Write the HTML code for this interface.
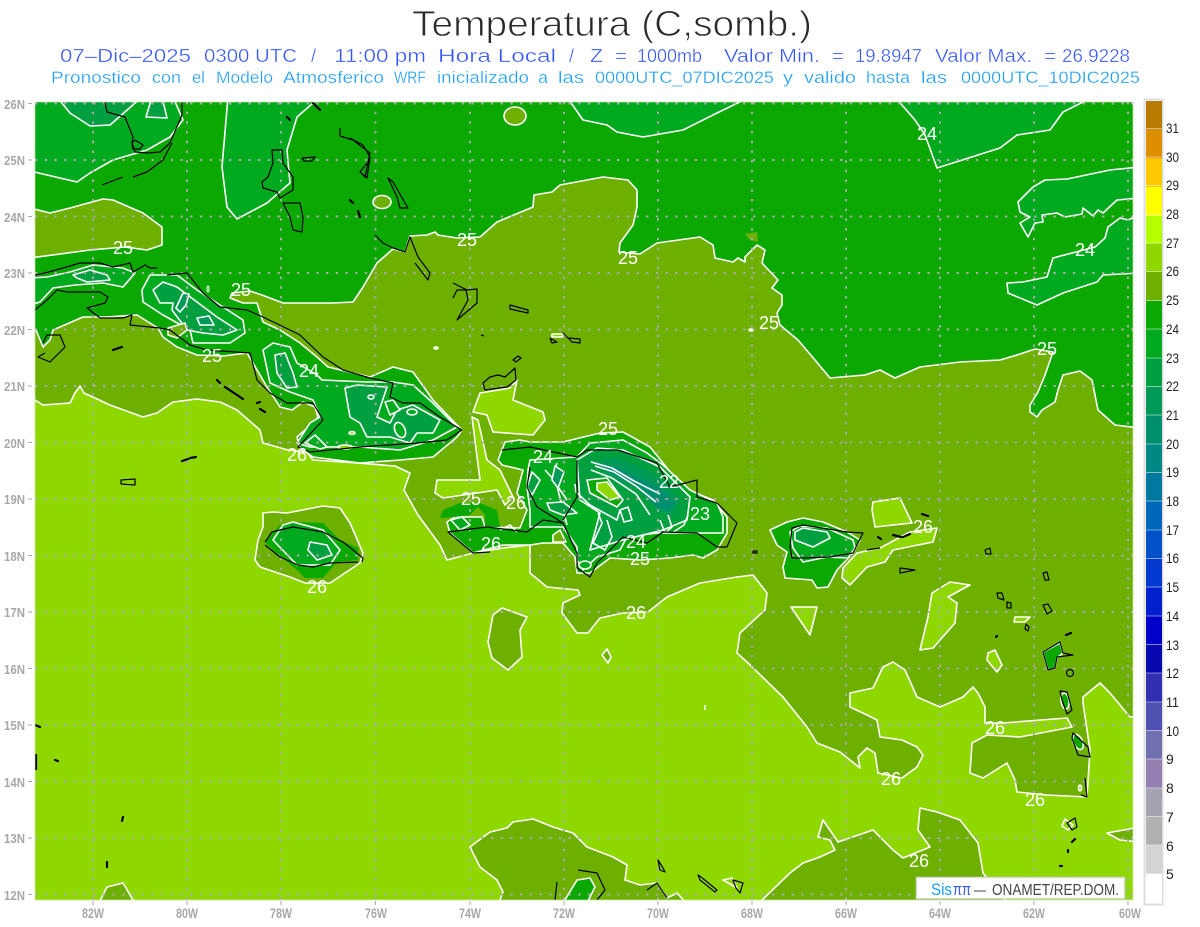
<!DOCTYPE html>
<html><head><meta charset="utf-8"><title>Temperatura</title>
<style>
html,body{margin:0;padding:0;background:#fff;width:1200px;height:927px;overflow:hidden}
svg{display:block}
text{font-family:"Liberation Sans",sans-serif}
.w{fill:#fff;font-size:18px;text-anchor:middle;dominant-baseline:central}
.c{stroke:#fff;stroke-width:1.6;stroke-linejoin:round;fill:none}
.k{stroke:#000;stroke-width:1.2;fill:none;stroke-linejoin:round}
.kk{stroke:#000;stroke-width:2.2;fill:none;stroke-linecap:round}
.ol{fill:#6eb000}.lt{fill:#8ed800}.g24{fill:#0aa800}.g23{fill:#00aa1e}.g22{fill:#00a040}.g21{fill:#009a58}.g20{fill:#009070}
.ax{fill:#a8a8a8;font-size:13px;font-weight:bold}
.cb{fill:#222;font-size:14px}
.l2{fill:#3355ff;font-size:18px;stroke:#fff;stroke-width:.35}
.l3{fill:#1a9cff;font-size:16.5px;stroke:#fff;stroke-width:.3}
</style></head><body>
<svg width="1200" height="927" viewBox="0 0 1200 927" xmlns="http://www.w3.org/2000/svg">
<defs><clipPath id="m"><rect x="35" y="102" width="1098" height="798"/></clipPath></defs>

<text x="412" y="36" font-size="36" fill="#2a2a2a" stroke="#fff" stroke-width=".9" textLength="400" lengthAdjust="spacingAndGlyphs">Temperatura (C,somb.)</text>

<g class="l2">
<text x="60" y="62" textLength="131" lengthAdjust="spacingAndGlyphs">07–Dic–2025</text>
<text x="204" y="62" textLength="93" lengthAdjust="spacingAndGlyphs">0300 UTC</text>
<text x="311" y="62">/</text>
<text x="334" y="62" textLength="92" lengthAdjust="spacingAndGlyphs">11:00 pm</text>
<text x="438" y="62" textLength="118" lengthAdjust="spacingAndGlyphs">Hora Local</text>
<text x="569" y="62">/</text>
<text x="590" y="62" textLength="13" lengthAdjust="spacingAndGlyphs">Z</text>
<text x="615" y="62" textLength="12" lengthAdjust="spacingAndGlyphs">=</text>
<text x="637" y="62" textLength="65" lengthAdjust="spacingAndGlyphs">1000mb</text>
<text x="724" y="62" textLength="96" lengthAdjust="spacingAndGlyphs">Valor Min.</text>
<text x="832" y="62" textLength="12" lengthAdjust="spacingAndGlyphs">=</text>
<text x="855" y="62" textLength="67" lengthAdjust="spacingAndGlyphs">19.8947</text>
<text x="935" y="62" textLength="97" lengthAdjust="spacingAndGlyphs">Valor Max.</text>
<text x="1044" y="62" textLength="12" lengthAdjust="spacingAndGlyphs">=</text>
<text x="1062" y="62" textLength="68" lengthAdjust="spacingAndGlyphs">26.9228</text>
</g>
<g class="l3">
<text x="51" y="83" textLength="90" lengthAdjust="spacingAndGlyphs">Pronostico</text>
<text x="152" y="83" textLength="29" lengthAdjust="spacingAndGlyphs">con</text>
<text x="192" y="83" textLength="13" lengthAdjust="spacingAndGlyphs">el</text>
<text x="216" y="83" textLength="57" lengthAdjust="spacingAndGlyphs">Modelo</text>
<text x="283" y="83" textLength="101" lengthAdjust="spacingAndGlyphs">Atmosferico</text>
<text x="394" y="83" textLength="32" lengthAdjust="spacingAndGlyphs">WRF</text>
<text x="437" y="83" textLength="92" lengthAdjust="spacingAndGlyphs">inicializado</text>
<text x="538" y="83" textLength="10" lengthAdjust="spacingAndGlyphs">a</text>
<text x="558" y="83" textLength="26" lengthAdjust="spacingAndGlyphs">las</text>
<text x="595" y="83" textLength="179" lengthAdjust="spacingAndGlyphs">0000UTC_07DIC2025</text>
<text x="783" y="83" textLength="10" lengthAdjust="spacingAndGlyphs">y</text>
<text x="804" y="83" textLength="52" lengthAdjust="spacingAndGlyphs">valido</text>
<text x="866" y="83" textLength="44" lengthAdjust="spacingAndGlyphs">hasta</text>
<text x="921" y="83" textLength="26" lengthAdjust="spacingAndGlyphs">las</text>
<text x="961" y="83" textLength="179" lengthAdjust="spacingAndGlyphs">0000UTC_10DIC2025</text>
</g>

<g clip-path="url(#m)">
<rect x="35" y="102" width="1098" height="798" class="ol"/>

<!-- 26+ light -->
<polygon class="lt c" points="35,400 43,405 70,403 75,393 80,386 84,393 110,405 143,417 157,413 173,402 197,399 220,402 237,410 260,430 263,443 288,450 307,452 313,460 357,463 395,466 410,473 404,490 418,515 440,545 447,560 473,553 503,548 530,545 530,573 547,587 578,590 580,595 563,603 562,613 577,633 588,633 600,618 623,613 648,612 667,597 700,583 737,577 753,575 767,593 765,610 740,633 737,653 747,662 783,697 807,727 817,743 840,752 860,768 858,757 867,748 875,753 878,773 902,778 917,767 923,755 917,747 902,740 880,737 877,720 867,715 850,707 850,693 873,688 883,667 893,662 905,670 917,697 940,707 963,697 973,687 978,693 985,707 985,723 1003,723 1067,718 1072,727 1020,737 987,735 972,743 970,773 983,778 1007,763 1015,780 1017,792 1047,795 1087,797 1090,750 1083,703 1083,697 1100,683 1110,693 1130,717 1140,717 1140,910 30,910 30,400"/>
<polygon class="lt c" points="472,417 478,420 487,460 500,470 513,497 505,505 497,490 443,498 435,493 437,480 480,480"/>
<polygon class="lt c" points="517,380 513,400 543,412 545,420 533,435 493,432 487,415 473,412 480,393 510,388"/>
<polygon class="lt c" points="791,607 817,607 810,635"/>
<polygon class="lt c" points="970,585 950,582 932,593 928,617 920,650 933,648 955,623 957,603 948,597"/>
<polygon class="lt c" points="988,653 995,650 1002,665 997,672 987,660"/>
<polygon class="lt c" points="1015,617 1030,617 1025,622 1014,622"/>
<polygon class="lt c" points="873,502 900,498 912,523 875,527 872,510"/>
<polygon class="lt c" points="937,528 933,542 893,550 885,562 867,567 850,585 842,578 843,568 857,553 880,548 910,532"/>

<!-- olive patches in the south -->
<polygon class="ol c" points="470,847 490,832 507,828 513,822 533,819 553,827 573,833 587,847 613,857 627,865 625,880 640,885 657,883 667,898 677,893 688,905 498,905 503,892 497,880 480,867"/>
<polygon class="ol c" points="757,905 790,873 803,863 820,857 835,850 830,840 818,837 823,820 838,842 873,830 893,850 903,858 930,847 918,830 920,808 937,812 960,820 978,843 983,873 1000,895 1010,905"/>
<polygon class="ol c" points="502,608 527,617 520,630 522,657 508,670 492,658 488,642 493,615"/>
<polygon class="ol c" points="607,649 602,655 608,663 611,657"/>
<polygon class="ol c" points="98,905 107,887 123,883 136,905"/>
<polygon class="ol c" points="1140,827 1107,833 1120,840 1140,842"/>

<!-- 24-25 main -->
<polygon class="g24 c" points="30,97 1140,97 1140,428 1115,425 1098,410 1092,380 1080,371 1063,375 1058,390 1055,402 1042,410 1037,417 1030,412 1030,405 1038,392 1045,375 1053,352 1035,349 1017,355 1000,360 960,362 920,367 895,378 880,370 865,375 830,378 815,360 798,340 780,325 777,313 782,305 782,295 772,288 778,280 762,263 765,250 757,245 745,257 745,262 738,258 733,262 715,258 713,245 700,237 657,243 640,254 619,252 620,243 633,225 637,207 637,190 628,180 603,177 560,185 552,192 534,195 533,207 497,222 480,237 457,238 438,235 435,232 427,235 410,236 405,252 393,249 377,263 363,287 353,302 333,303 283,303 262,295 250,291 232,293 230,298 243,303 257,303 263,322 280,330 300,343 317,357 328,367 370,377 393,367 413,372 433,400 457,425 462,430 457,437 433,457 400,460 360,463 313,457 300,448 297,437 313,423 318,417 315,407 303,402 292,410 280,407 267,387 253,363 247,353 223,356 197,355 177,347 163,337 158,328 137,315 107,317 83,317 53,330 50,340 43,347 36,330 30,330"/>
<polygon class="ol c" points="30,208 50,213 70,208 103,199 113,200 143,213 162,227 162,245 147,250 125,247 90,250 30,258"/>
<ellipse cx="515" cy="116" rx="11" ry="9" class="ol c"/>
<ellipse cx="382" cy="202" rx="9" ry="6.5" class="ol c"/>
<polygon fill="#6eb000" points="745,234 757,232 758,242 750,240"/>

<!-- 23 top patches -->
<polygon class="g23 c" points="30,171 77,182 90,173 113,160 147,150 170,137 183,120 173,97 30,97"/>
<polygon class="g22 c" points="57,97 70,113 90,126 110,125 142,97"/>
<polygon class="g22 c" points="152,97 146,117 167,118 162,97"/>
<polygon class="g23 c" points="228,97 222,167 227,207 237,219 267,203 290,183 287,150 297,117 320,97"/>
<polygon class="g23 c" points="567,97 583,120 607,125 617,132 643,137 683,130 717,113 750,97"/>
<polygon class="g23 c" points="895,97 915,120 925,135 937,168 1000,148 1017,135 1050,130 1063,112 1093,97"/>
<polygon class="g23 c" points="1140,167 1110,170 1067,179 1045,180 1033,187 1018,202 1020,212 1030,217 1020,223 1028,237 1035,223 1043,222 1042,215 1057,213 1065,217 1082,214 1083,208 1093,216 1098,210 1103,213 1117,200 1140,198"/>
<polygon class="g23 c" points="1140,215 1128,220 1120,218 1108,227 1105,238 1095,247 1072,253 1053,258 1047,277 1023,282 1007,283 1008,293 1037,305 1063,293 1097,282 1103,275 1140,273"/>

<!-- Cuba -->
<polygon class="g23 c" points="30,278 47,277 70,272 93,265 123,268 135,273 123,287 103,283 75,285 53,288 40,302 30,305"/>
<polygon class="g22 c" points="73,275 90,270 107,275 110,280 87,282 77,278"/>
<polygon class="g23 c" points="142,290 150,275 177,275 197,290 223,307 243,320 245,333 230,343 193,343 190,330 163,315 143,302"/>
<polygon class="g22 c" points="153,290 163,282 177,287 197,302 217,317 237,330 223,335 203,333 187,330 172,310 173,303 160,303"/>
<polygon class="ol c" points="168,328 185,323 187,330 177,338 168,335"/>
<polygon class="g21 c" points="183,293 189,294 186,305 180,312 176,308"/>
<polygon class="g21 c" points="197,318 209,316 214,325 200,325"/>
<polygon class="g23 c" points="263,350 273,343 290,347 297,363 317,375 322,380 367,382 393,382 413,385 433,403 457,427 433,440 400,450 360,447 310,447 297,443 310,423 320,417 313,400 290,392 270,383"/>
<polygon class="g22 c" points="275,355 285,353 293,373 297,387 287,388 277,373"/>
<polygon class="g22 c" points="345,388 357,385 387,387 377,417 390,423 397,410 413,405 440,420 433,433 417,433 410,443 390,437 367,437 360,423 350,417 347,400"/>
<polygon class="g23 c" points="305,443 315,435 327,447 320,449"/>
<polygon class="g23 c" points="385,402 393,400 400,410 390,415"/>
<ellipse cx="400" cy="430" rx="5" ry="8" class="g23 c" transform="rotate(-25 400 430)"/>
<ellipse cx="412" cy="412" rx="5" ry="3" class="g23 c"/>
<ellipse cx="371" cy="397" rx="3" ry="2" class="g23 c"/>
<ellipse cx="352" cy="433" rx="3" ry="1.5" class="lt c"/>
<ellipse cx="345" cy="447" rx="7" ry="2" class="lt c"/>

<!-- Hispaniola -->
<polygon class="g24 c" points="498,460 505,442 520,440 530,442 563,442 600,433 623,432 650,447 663,463 683,488 713,500 727,517 727,533 717,550 703,558 693,555 670,558 640,560 610,558 590,573 577,573 575,557 563,543 543,543 530,545 503,545 473,553 450,533 447,522 455,517 482,517 485,527 520,528 527,510 517,493 523,470 502,465"/>
<polygon class="g24" points="440,518 443,510 460,503 480,503 497,510 500,527 485,527 485,515 478,507 470,515 455,517"/>
<polygon class="g23 c" points="577,457 590,443 623,440 647,453 663,465 690,490 717,503 723,517 723,533 703,533 657,533 627,537 620,550 597,557 583,570 577,560 577,547 563,527 530,527 530,510 527,487 528,470 530,460"/>
<polygon class="g22 c" points="577,460 597,448 623,450 660,467 690,497 687,520 663,530 623,540 590,550 600,513 580,500"/>
<polygon class="g21" points="593,462 617,458 637,466 660,478 680,500 672,515 657,510 637,490 610,477"/>
<polygon class="g20" points="598,466 617,466 637,477 660,487 675,503 668,512 657,507 637,487 610,473"/>
<polyline class="c" points="591,462 612,468 634,481 660,494"/>
<polyline class="c" points="595,466 614,472 636,486 656,502"/>
<polyline class="c" points="591,470 612,478 636,494 650,515"/>
<polygon class="g24 c" points="587,480 607,478 623,500 617,507 590,493"/>
<polygon class="lt c" points="597,483 607,482 620,497 610,500 597,490"/>
<polyline class="c" points="575,484 576,492 590,505 617,520 620,510"/>
<polyline class="c" points="545,470 556,482 560,498 567,525"/>
<polyline class="c" points="557,463 552,478 558,487 567,500"/>
<polyline class="c" points="598,513 602,523 593,543 605,550 612,537 607,520"/>
<polygon class="g21 c" points="555,466 564,472 558,488 552,480"/>
<polygon class="g22 c" points="547,503 563,502 577,513 563,515 550,510"/>
<polygon class="g22 c" points="527,487 532,472 540,480 532,495"/>
<polygon class="g22 c" points="620,510 628,507 632,520 624,522"/>
<polyline class="c" points="668,515 672,527 665,533 660,520"/>
<polyline class="c" points="688,515 684,525 672,533"/>
<polygon class="g23 c" points="451,520 462,517 470,525 460,530"/>
<polyline class="c" points="500,530 510,525 517,532"/>
<polygon class="ol c" points="553,535 560,530 566,542 553,542"/>
<ellipse cx="585" cy="565" rx="6" ry="4" class="g23 c"/>

<!-- Jamaica -->
<polygon class="ol c" points="263,513 273,512 287,513 323,506 340,508 350,523 363,553 360,563 330,583 305,583 290,577 260,567 255,560 258,540 263,527"/>
<polygon class="g24" points="265,542 280,525 293,522 323,523 340,540 358,548 358,560 337,562 323,578 305,578 297,570 273,550"/>
<polygon class="g23 c" points="273,540 283,525 293,522 323,530 340,550 330,565 297,565"/>
<polygon class="g22 c" points="310,542 327,545 332,555 317,560 308,550"/>

<!-- Puerto Rico -->
<polygon class="g24 c" points="770,530 787,522 803,518 823,522 847,532 860,540 853,553 837,570 828,587 817,588 812,580 785,578 783,567 787,552 777,545"/>
<polygon class="g23 c" points="790,532 800,526 827,528 853,540 855,548 848,558 827,557 803,562 793,548"/>
<polygon class="g22 c" points="795,532 803,528 827,532 830,538 813,547 795,540"/>

<!-- Lesser Antilles greens -->
<polygon class="g24 c" points="1043,652 1060,643 1063,653 1057,658 1055,668 1048,670"/>
<ellipse cx="1065" cy="701" rx="4" ry="8" class="g24 c" transform="rotate(-8 1065 701)"/>
<ellipse cx="1078" cy="742" rx="4.5" ry="8" class="g24 c" transform="rotate(-25 1078 742)"/>
<ellipse cx="1080" cy="788" rx="1.5" ry="3" class="lt c"/>
<polygon class="g24 c" points="563,903 577,880 590,878 595,887 587,903"/>
<polygon class="lt c" points="723,880 732,878 737,888 730,884"/>
<polygon class="lt c" points="1065,819 1073,825 1068,830 1062,826"/>

<!-- small white blobs -->
<polygon class="lt c" points="552,334 563,334 563,337 552,337"/>
<ellipse cx="436" cy="348" rx="2" ry="1" class="lt c"/>
<ellipse cx="751" cy="330" rx="2" ry="1" class="lt c"/>
<line x1="705" y1="705" x2="705" y2="710" stroke="#fff" stroke-width="1.5"/>
<ellipse cx="208" cy="289" rx="1" ry="3" fill="none" stroke="#fff"/>

<!-- grid -->
<g stroke="#aaa" stroke-width="2" stroke-dasharray="2.4 7.3" fill="none">
<path d="M35 103.5H1133M35 160H1133M35 216.5H1133M35 273H1133M35 329.5H1133M35 386H1133M35 442.5H1133M35 499H1133M35 555.5H1133M35 612H1133M35 668.5H1133M35 725H1133M35 781.5H1133M35 838H1133M35 894.5H1133"/>
<path d="M93 102V900M187 102V900M281 102V900M375.5 102V900M470 102V900M564 102V900M658 102V900M752 102V900M846 102V900M940 102V900M1034 102V900M1128 102V900"/>
</g>

<!-- coast lines -->
<g class="k">
<polyline points="105,102 107,112 125,117 133,137 132,143 135,152 148,153 160,152 170,143 182,115 182,102"/>
<polygon points="132,143 135,140 143,145 140,149 133,149"/>
<polyline points="102,185 115,180 123,177"/><polyline points="133,177 147,172 163,160 172,143"/>
<polygon points="272,150 282,150 283,163 293,177 293,190 280,198 277,192 263,188 262,182 268,177 273,163"/>
<polygon points="283,203 300,203 303,217 302,232 293,230 290,217"/>
<polyline points="340,128 340,136 353,140 370,153 365,177 360,172 367,163"/>
<polygon points="302,158 315,157 312,161 304,161"/>
<polyline points="350,138 363,145 370,157 367,178 360,172"/>
<polygon points="388,178 393,182 408,208 400,208 397,197"/>
<polyline points="375,235 383,243 393,248 405,252 410,237 418,257 430,273 428,280 415,263"/>
<polyline points="453,283 467,290 457,290 453,298"/><polygon points="477,289 477,303 457,320 468,300 466,290"/>
<polygon points="510,305 528,310 528,313 510,309"/>
<polyline points="550,338 557,342 552,343 550,338"/>
<polygon points="563,333 568,338 580,339 580,343 572,342 567,337"/>
<polygon points="513,360 518,356 521,358 516,362"/>
<polygon points="483,383 490,377 498,375 505,377 515,368 516,380 507,387 485,390"/>
<polyline points="481,335 484,336"/>
<polyline points="35,275 45,273 63,268 80,263 100,263 113,267 130,263 133,272 145,265 150,268 157,268"/>
<polyline points="167,275 187,273 203,293 220,307 247,310 263,317 290,330 300,335 323,357 343,370 370,378 393,383 390,397 403,403 420,403 440,417 462,430 447,440 417,443 360,447 310,452 298,447 323,420 313,403 287,403 270,393 257,380 250,353 207,350 190,345 170,330 160,328 130,325 132,315 123,318 100,318 87,308 105,303 108,297 100,292 67,292 57,290 47,300 35,310"/>
<polyline points="43,343 47,335 60,335 65,347 50,362 38,357 45,353"/>
<polyline points="265,542 272,532 293,527 323,532 343,542 363,558 362,562"/>
<polyline points="358,562 330,563 313,567 298,565 280,557 265,545"/>
<polyline points="502,450 530,447 577,457 587,450 618,450 657,463 670,487 697,480 697,497 717,503 737,523 727,547 717,547 697,533 663,532 647,543 623,537 597,563 590,577 577,568 577,553 563,523 543,520 527,532 487,527 448,532 473,553 490,552"/>
<polyline points="530,467 527,487 537,507 563,523"/><polyline points="577,460 577,497 563,520"/>
<polygon points="792,528 803,525 847,532 863,533 853,553 830,557 803,558 792,558 790,547"/>
<polyline points="867,550 880,548"/>
<polygon points="900,568 915,570 900,573"/>
<polygon points="1043,652 1060,642 1063,653 1073,655 1057,657 1055,668 1048,670"/>
<circle cx="1070" cy="673" r="3.5"/>
<polygon points="1060,691 1067,692 1072,710 1067,714 1062,700"/>
<polygon points="1073,733 1088,747 1090,757 1078,755 1072,738"/>
<polyline points="1085,778 1087,797 1081,795"/>
<polygon points="1067,823 1075,818 1077,827 1072,830"/>
<polygon points="985,550 990,548 991,554 986,554"/>
<polygon points="1043,573 1047,572 1049,580 1045,580"/>
<polygon points="1007,602 1011,603 1011,608 1007,608"/>
<polygon points="1043,605 1048,604 1052,611 1047,614"/>
<polygon points="1026,624 1029,627 1028,631 1025,629"/>
<polygon points="997,593 1002,593 1004,600 998,598"/>
<polygon points="658,860 663,868 665,872 660,870"/>
<polygon points="698,875 701,877 717,890 715,892 700,880"/>
<polygon points="733,880 743,883 740,893 736,888"/>
<polyline points="647,890 657,883 667,898"/>
<polyline points="557,882 555,900"/>
<polyline points="578,870 597,873 605,890 597,900"/>
<polygon points="753,551 757,551 757,553 753,553"/>
<polygon points="121,480 135,479 135,485 121,484"/>
</g>
<g class="kk">
<path d="M113 350l9-3M217 380l3 3M225 387l18 12M257 403l3-1M260 409l5 3M182 461l6-2M190 458l6-1M287 117l3 3M313 103l7 7M350 200l3 3M358 211l2 6M922 514l6 2M878 537l3 2M893 535l8 2M903 537l7-3M107 862v5M123 817l-1 4M35 725l5 2M36 755v14M55 760l3 1M1066 635l5-2M997 636l-1 1M1072 842l3-3M1068 850v2M1060 866h2"/>
</g>

<!-- labels -->
<g class="w">
<text x="927" y="134">24</text><text x="123" y="248">25</text><text x="467" y="240">25</text><text x="628" y="258">25</text>
<text x="1085" y="250">24</text><text x="241" y="290">25</text><text x="769" y="323">25</text><text x="1047" y="349">25</text>
<text x="212" y="356">25</text><text x="309" y="371">24</text><text x="608" y="429">25</text><text x="297" y="455">26</text>
<text x="543" y="457">24</text><text x="669" y="482">22</text><text x="471" y="499">25</text><text x="516" y="503">26</text>
<text x="700" y="514">23</text><text x="636" y="542">24</text><text x="491" y="544">26</text><text x="640" y="559">25</text>
<text x="923" y="527">26</text><text x="317" y="587">26</text><text x="636" y="613">26</text><text x="995" y="728">26</text>
<text x="891" y="779">26</text><text x="1035" y="800">26</text><text x="919" y="861">26</text>
</g>
</g>

<rect x="34.5" y="101.5" width="1099" height="799" fill="none" stroke="#eef7e0" stroke-width="1.5"/>

<!-- axes -->
<g class="ax" font-size="13">
<text x="4" y="109" textLength="21" lengthAdjust="spacingAndGlyphs">26N</text>
<text x="4" y="165" textLength="21" lengthAdjust="spacingAndGlyphs">25N</text>
<text x="4" y="222" textLength="21" lengthAdjust="spacingAndGlyphs">24N</text>
<text x="4" y="278" textLength="21" lengthAdjust="spacingAndGlyphs">23N</text>
<text x="4" y="335" textLength="21" lengthAdjust="spacingAndGlyphs">22N</text>
<text x="4" y="391" textLength="21" lengthAdjust="spacingAndGlyphs">21N</text>
<text x="4" y="448" textLength="21" lengthAdjust="spacingAndGlyphs">20N</text>
<text x="4" y="504" textLength="21" lengthAdjust="spacingAndGlyphs">19N</text>
<text x="4" y="561" textLength="21" lengthAdjust="spacingAndGlyphs">18N</text>
<text x="4" y="617" textLength="21" lengthAdjust="spacingAndGlyphs">17N</text>
<text x="4" y="674" textLength="21" lengthAdjust="spacingAndGlyphs">16N</text>
<text x="4" y="730" textLength="21" lengthAdjust="spacingAndGlyphs">15N</text>
<text x="4" y="787" textLength="21" lengthAdjust="spacingAndGlyphs">14N</text>
<text x="4" y="843" textLength="21" lengthAdjust="spacingAndGlyphs">13N</text>
<text x="4" y="900" textLength="21" lengthAdjust="spacingAndGlyphs">12N</text>
</g>
<path d="M28 103.5h4M28 160h4M28 216.5h4M28 273h4M28 329.5h4M28 386h4M28 442.5h4M28 499h4M28 555.5h4M28 612h4M28 668.5h4M28 725h4M28 781.5h4M28 838h4M28 894.5h4" stroke="#aaa" stroke-width="1"/>
<path d="M93 901v4M187 901v4M281 901v4M375.500 901v4M470 901v4M564 901v4M658 901v4M752 901v4M846 901v4M940 901v4M1034 901v4M1128 901v4" stroke="#aaa" stroke-width="1"/>
<g class="ax" style="font-size:14px">
<text x="82" y="918" textLength="22" lengthAdjust="spacingAndGlyphs">82W</text>
<text x="176" y="918" textLength="22" lengthAdjust="spacingAndGlyphs">80W</text>
<text x="270" y="918" textLength="22" lengthAdjust="spacingAndGlyphs">78W</text>
<text x="365" y="918" textLength="22" lengthAdjust="spacingAndGlyphs">76W</text>
<text x="459" y="918" textLength="22" lengthAdjust="spacingAndGlyphs">74W</text>
<text x="553" y="918" textLength="22" lengthAdjust="spacingAndGlyphs">72W</text>
<text x="647" y="918" textLength="22" lengthAdjust="spacingAndGlyphs">70W</text>
<text x="741" y="918" textLength="22" lengthAdjust="spacingAndGlyphs">68W</text>
<text x="835" y="918" textLength="22" lengthAdjust="spacingAndGlyphs">66W</text>
<text x="929" y="918" textLength="22" lengthAdjust="spacingAndGlyphs">64W</text>
<text x="1023" y="918" textLength="22" lengthAdjust="spacingAndGlyphs">62W</text>
<text x="1119" y="918" textLength="22" lengthAdjust="spacingAndGlyphs">60W</text>
</g>

<!-- colour bar -->
<rect x="1144.500" y="99.500" width="18" height="805" fill="#fff" stroke="#ddd" stroke-width="2"/>
<g>
<rect x="1146" y="101" width="16" height="28.7" fill="#b87a00"/>
<rect x="1146" y="129.700" width="16" height="28.7" fill="#dc9000"/>
<rect x="1146" y="158.400" width="16" height="28.7" fill="#ffc800"/>
<rect x="1146" y="187.100" width="16" height="28.7" fill="#ffff00"/>
<rect x="1146" y="215.800" width="16" height="28.7" fill="#b4ff00"/>
<rect x="1146" y="243.500" width="16" height="28.7" fill="#8ed800"/>
<rect x="1146" y="272" width="16" height="28.7" fill="#6eb000"/>
<rect x="1146" y="300.700" width="16" height="28.7" fill="#0aa800"/>
<rect x="1146" y="329.400" width="16" height="28.7" fill="#00aa1e"/>
<rect x="1146" y="358" width="16" height="28.7" fill="#00a040"/>
<rect x="1146" y="386.700" width="16" height="28.7" fill="#009a58"/>
<rect x="1146" y="415.400" width="16" height="28.7" fill="#00906c"/>
<rect x="1146" y="444" width="16" height="28.7" fill="#008884"/>
<rect x="1146" y="472.700" width="16" height="28.7" fill="#0078a0"/>
<rect x="1146" y="501.400" width="16" height="28.7" fill="#0068b8"/>
<rect x="1146" y="530" width="16" height="28.7" fill="#0050c8"/>
<rect x="1146" y="558.700" width="16" height="28.7" fill="#0038d0"/>
<rect x="1146" y="587.400" width="16" height="28.7" fill="#0020d0"/>
<rect x="1146" y="616" width="16" height="28.7" fill="#0000c8"/>
<rect x="1146" y="644.700" width="16" height="28.7" fill="#0808b0"/>
<rect x="1146" y="673.400" width="16" height="28.7" fill="#3030b0"/>
<rect x="1146" y="702" width="16" height="28.7" fill="#5050b0"/>
<rect x="1146" y="730.700" width="16" height="28.7" fill="#7070b0"/>
<rect x="1146" y="759.400" width="16" height="28.7" fill="#9480b0"/>
<rect x="1146" y="788" width="16" height="28.7" fill="#a4a4b0"/>
<rect x="1146" y="816.700" width="16" height="28.7" fill="#b0b0b0"/>
<rect x="1146" y="845.400" width="16" height="28.7" fill="#d4d4d4"/>
<rect x="1146" y="874" width="16" height="29.500" fill="#ffffff"/>
</g>
<path d="M1146 128.500h16M1146 157h16M1146 185.500h16M1146 214.500h16M1146 243h16M1146 271.500h16M1146 300.500h16M1146 329h16M1146 358h16M1146 386.500h16M1146 415h16M1146 444h16M1146 472.500h16M1146 501h16M1146 530h16M1146 558.500h16M1146 587h16M1146 616h16M1146 644.500h16M1146 673h16M1146 702h16M1146 730.500h16M1146 759h16M1146 788h16M1146 816.500h16M1146 845h16M1146 874h16" stroke="#fff" stroke-opacity=".45" stroke-width="1"/>
<g class="cb">
<text x="1166" y="133" textLength="13" lengthAdjust="spacingAndGlyphs">31</text>
<text x="1166" y="162" textLength="13" lengthAdjust="spacingAndGlyphs">30</text>
<text x="1166" y="190" textLength="13" lengthAdjust="spacingAndGlyphs">29</text>
<text x="1166" y="219" textLength="13" lengthAdjust="spacingAndGlyphs">28</text>
<text x="1166" y="248" textLength="13" lengthAdjust="spacingAndGlyphs">27</text>
<text x="1166" y="276" textLength="13" lengthAdjust="spacingAndGlyphs">26</text>
<text x="1166" y="305" textLength="13" lengthAdjust="spacingAndGlyphs">25</text>
<text x="1166" y="334" textLength="13" lengthAdjust="spacingAndGlyphs">24</text>
<text x="1166" y="363" textLength="13" lengthAdjust="spacingAndGlyphs">23</text>
<text x="1166" y="391" textLength="13" lengthAdjust="spacingAndGlyphs">22</text>
<text x="1166" y="420" textLength="13" lengthAdjust="spacingAndGlyphs">21</text>
<text x="1166" y="449" textLength="13" lengthAdjust="spacingAndGlyphs">20</text>
<text x="1166" y="477" textLength="13" lengthAdjust="spacingAndGlyphs">19</text>
<text x="1166" y="506" textLength="13" lengthAdjust="spacingAndGlyphs">18</text>
<text x="1166" y="535" textLength="13" lengthAdjust="spacingAndGlyphs">17</text>
<text x="1166" y="563" textLength="13" lengthAdjust="spacingAndGlyphs">16</text>
<text x="1166" y="592" textLength="13" lengthAdjust="spacingAndGlyphs">15</text>
<text x="1166" y="621" textLength="13" lengthAdjust="spacingAndGlyphs">14</text>
<text x="1166" y="650" textLength="13" lengthAdjust="spacingAndGlyphs">13</text>
<text x="1166" y="678" textLength="13" lengthAdjust="spacingAndGlyphs">12</text>
<text x="1166" y="707" textLength="13" lengthAdjust="spacingAndGlyphs">11</text>
<text x="1166" y="736" textLength="13" lengthAdjust="spacingAndGlyphs">10</text>
<text x="1166" y="764">9</text>
<text x="1166" y="793">8</text>
<text x="1166" y="822">7</text>
<text x="1166" y="851">6</text>
<text x="1166" y="879">5</text>
</g>

<!-- legend -->
<rect x="916.500" y="877.500" width="208" height="21" fill="#fff" stroke="#d8d8d8" stroke-width="1.5"/>
<text x="931" y="895" font-size="17" fill="#1a9cff" textLength="21" lengthAdjust="spacingAndGlyphs">Sis</text>
<text x="953" y="895" font-size="17" fill="#3355ff" textLength="18" lengthAdjust="spacingAndGlyphs">ππ</text>
<text x="974" y="895" font-size="15" fill="#444" textLength="12" lengthAdjust="spacingAndGlyphs">–</text>
<text x="992" y="895" font-size="16" fill="#444" textLength="127" lengthAdjust="spacingAndGlyphs">ONAMET/REP.DOM.</text>
</svg>
</body></html>
